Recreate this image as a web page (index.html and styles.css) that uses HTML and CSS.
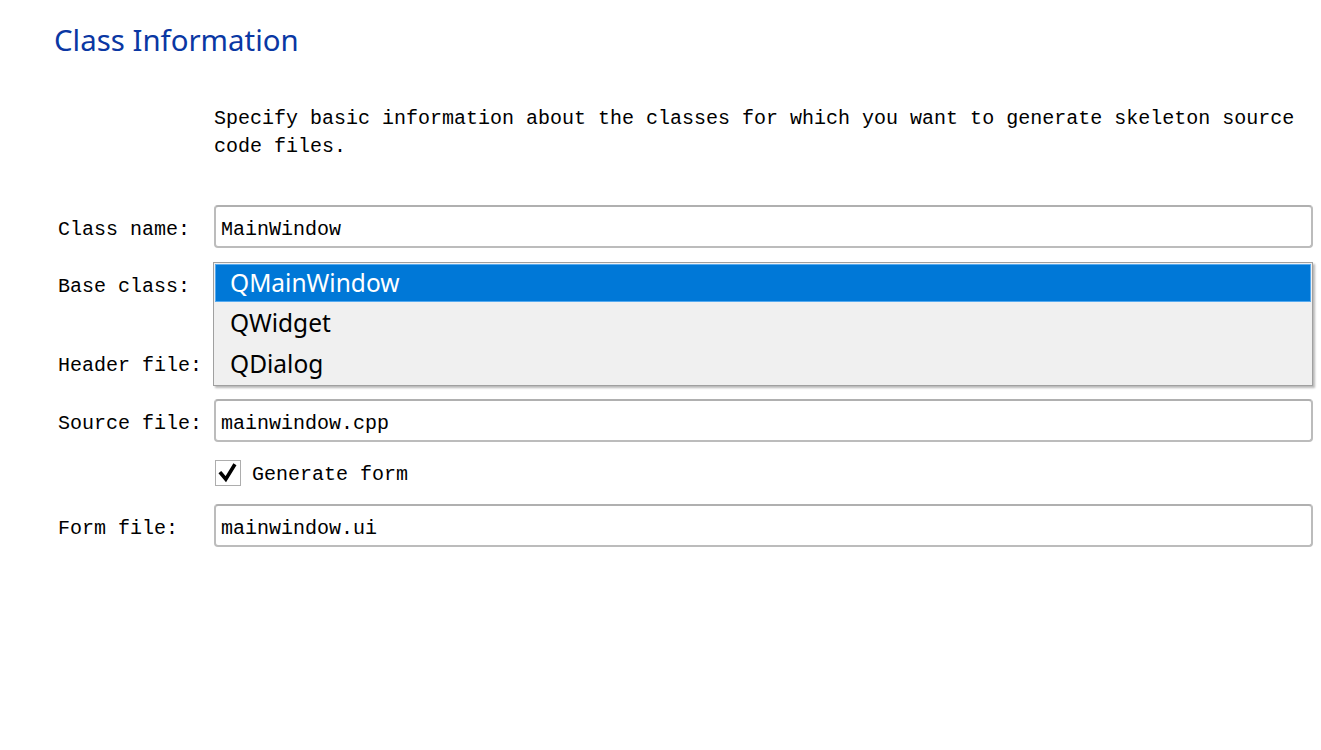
FILE: index.html
```html
<!DOCTYPE html>
<html>
<head>
<meta charset="utf-8">
<link rel="stylesheet" href="styles.css">
</head>
<body>
<div class="page">
  <h1 class="title">Class Information</h1>
  <p class="desc">Specify basic information about the classes for which you want to generate skeleton source code files.</p>
  <div class="form">
    <label class="lbl">Class name:</label>
    <div class="field"><span class="input">MainWindow</span></div>

    <label class="lbl">Base class:</label>
    <div class="field combo-wrap">
      <span class="input combo"></span>
      <ul class="popup">
        <li class="item sel">QMainWindow</li>
        <li class="item">QWidget</li>
        <li class="item">QDialog</li>
      </ul>
    </div>

    <label class="lbl hdr">Header file:</label>
    <div class="field hdr"><span class="input"></span></div>

    <label class="lbl">Source file:</label>
    <div class="field"><span class="input">mainwindow.cpp</span></div>

    <span></span>
    <div class="check-row">
      <span class="checkbox"><svg width="24" height="24" viewBox="0 0 24 24"><path d="M5 12.5 L9.8 18.2 L18 4.8" fill="none" stroke="#000" stroke-width="3.6" stroke-linecap="square" stroke-linejoin="miter"/></svg></span>
      <span class="check-label">Generate form</span>
    </div>

    <label class="lbl">Form file:</label>
    <div class="field"><span class="input">mainwindow.ui</span></div>
  </div>
</div>
</body>
</html>
```

FILE: styles.css
```css
html, body {
  margin: 0;
  padding: 0;
  background: #ffffff;
}

.page {
  padding: 18px 8px 0 58px;
  font-family: "Liberation Mono", "DejaVu Sans Mono", monospace;
  font-size: 20px;
  color: #000;
}

.title {
  margin: 0 0 0 -4px;
  font-family: "Noto Sans", "Open Sans", sans-serif;
  font-weight: normal;
  font-size: 29.4px;
  line-height: 44px;
  color: #0a37a3;
}

.desc {
  margin: 43px 0 0 156px;
  line-height: 28px;
}

.form {
  margin-top: 44px;
  display: grid;
  grid-template-columns: 156px 1fr;
  row-gap: 14px;
  align-items: center;
}

.lbl {
  white-space: nowrap;
  padding-top: 5px;
}

.lbl.hdr {
  padding-top: 4px;
}

.hdr {
  margin-top: 23px;
}

.field {
  display: flex;
}

.input {
  flex: 1;
  box-sizing: border-box;
  height: 43px;
  display: flex;
  align-items: center;
  padding: 5px 0 0 5px;
  border: 2px solid #bcbcbc;
  border-top-color: #b0b0b0;
  border-radius: 4px;
  background: #fff;
}

.combo-wrap {
  position: relative;
}

.popup {
  position: absolute;
  left: -1px;
  top: 0;
  right: 0;
  margin: 0;
  padding: 1px;
  list-style: none;
  background: #f0f0f0;
  border: 1px solid #a0a0a0;
  box-shadow: 2px 2px 2px rgba(0, 0, 0, 0.28);
  font-family: "Noto Sans", "Open Sans", sans-serif;
  font-size: 24.5px;
  z-index: 2;
}

.item {
  height: 39px;
  line-height: 39px;
  padding-left: 14px;
  border: 1px solid transparent;
  color: #000;
}

.item.sel {
  height: 36px;
  line-height: 36px;
  background: #0078d7;
  border-color: #55aaf0;
  color: #fff;
}

.check-row {
  height: 34px;
  display: flex;
  align-items: center;
  gap: 11px;
}

.check-label {
  padding-top: 2px;
}

.checkbox {
  box-sizing: border-box;
  width: 26px;
  height: 26px;
  margin-left: 1px;
  border: 1px solid #adadad;
  background: #fff;
  display: flex;
  align-items: center;
  justify-content: center;
}
```
